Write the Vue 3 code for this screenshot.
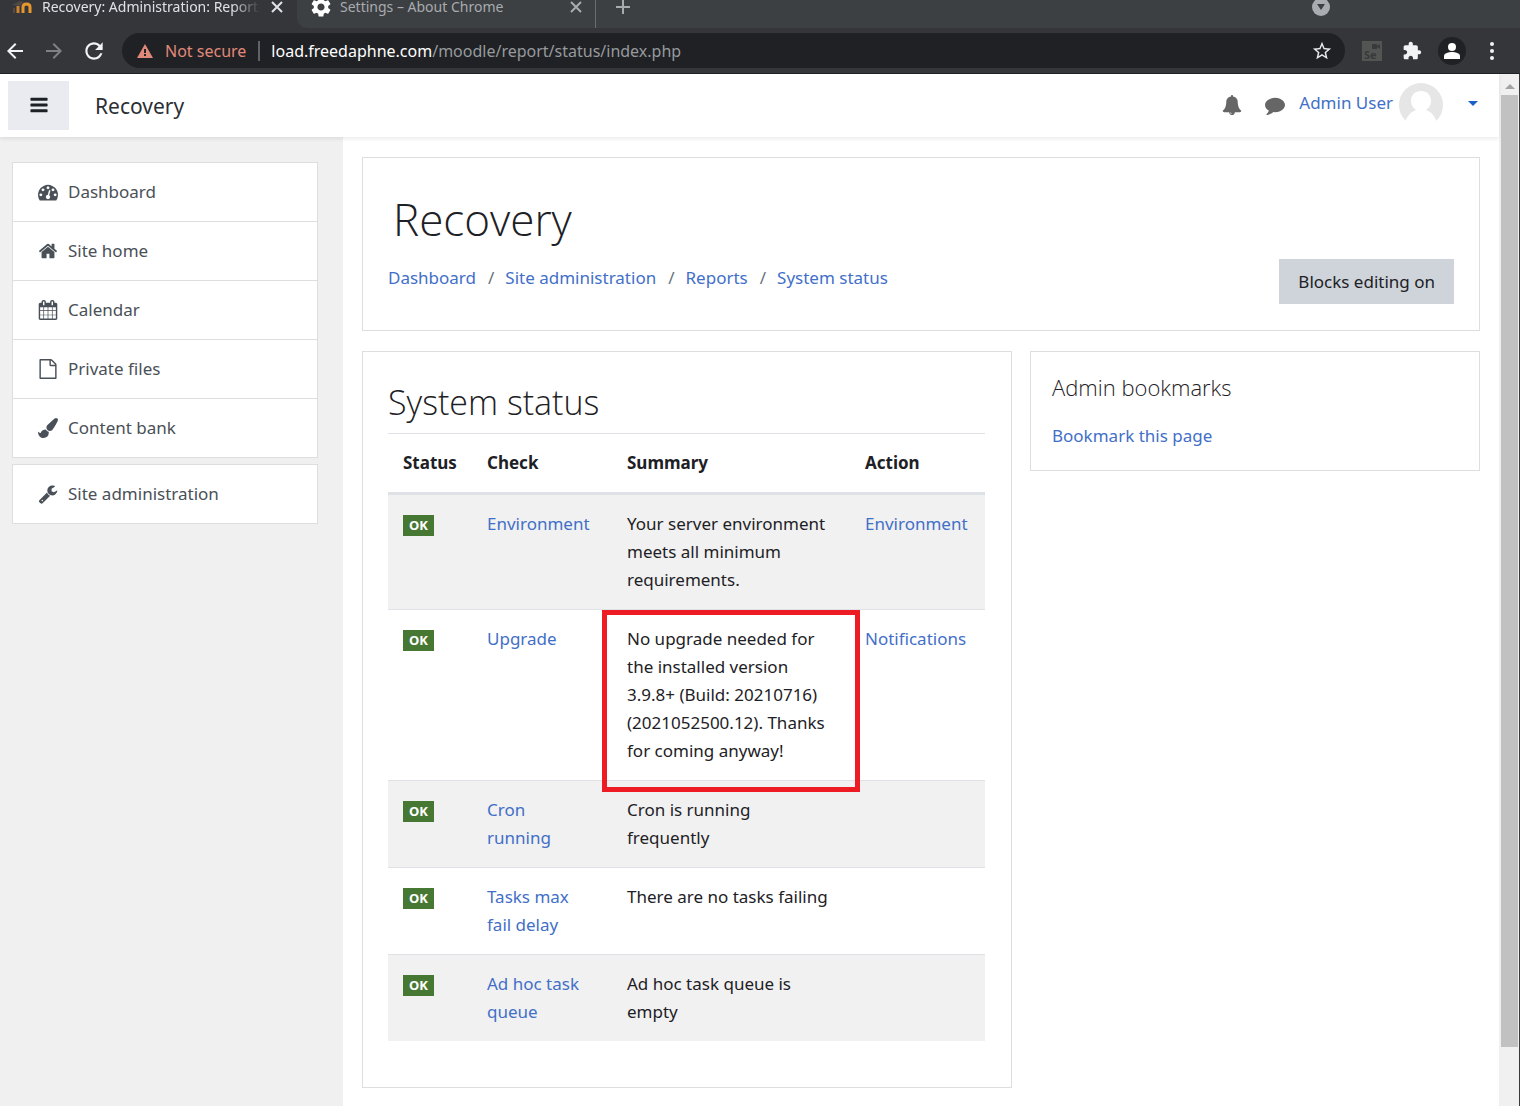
<script setup>
const drawer = [
  [
    { label: 'Dashboard', icon: 'tachometer' },
    { label: 'Site home', icon: 'home' },
    { label: 'Calendar', icon: 'calendar' },
    { label: 'Private files', icon: 'file' },
    { label: 'Content bank', icon: 'brush' },
  ],
  [{ label: 'Site administration', icon: 'wrench' }],
]

const crumbs = ['Dashboard', 'Site administration', 'Reports', 'System status']

const checks = [
  { name: 'Environment', summary: 'Your server environment meets all minimum requirements.', action: 'Environment' },
  {
    name: 'Upgrade',
    summary: 'No upgrade needed for the installed version 3.9.8+ (Build: 20210716) (2021052500.12). Thanks for coming anyway!',
    action: 'Notifications',
    marked: true,
  },
  { name: 'Cron running', summary: 'Cron is running frequently', action: '' },
  { name: 'Tasks max fail delay', summary: 'There are no tasks failing', action: '' },
  { name: 'Ad hoc task queue', summary: 'Ad hoc task queue is empty', action: '' },
]

const icons = {
  bars: 'M1664 1344v128q0 26-19 45t-45 19h-1408q-26 0-45-19t-19-45v-128q0-26 19-45t45-19h1408q26 0 45 19t19 45zm0-512v128q0 26-19 45t-45 19h-1408q-26 0-45-19t-19-45v-128q0-26 19-45t45-19h1408q26 0 45 19t19 45zm0-512v128q0 26-19 45t-45 19h-1408q-26 0-45-19t-19-45v-128q0-26 19-45t45-19h1408q26 0 45 19t19 45z',
  home: 'M1472 992v480q0 26-19 45t-45 19h-384v-384h-256v384h-384q-26 0-45-19t-19-45v-480q0-1 .5-3t.5-3l575-474 575 474q1 2 1 6zm223-69l-62 74q-8 9-21 11h-3q-13 0-21-7l-692-577-692 577q-12 8-24 7-13-2-21-11l-62-74q-8-10-7-23.5t11-21.5l719-599q32-26 76-26t76 26l244 204v-195q0-14 9-23t23-9h192q14 0 23 9t9 23v408l219 182q10 8 11 21.5t-7 23.5z',
  tachometer: 'M384 1152q0-53-37.5-90.5t-90.5-37.5-90.5 37.5-37.5 90.5 37.5 90.5 90.5 37.5 90.5-37.5 37.5-90.5zm192-448q0-53-37.5-90.5t-90.5-37.5-90.5 37.5-37.5 90.5 37.5 90.5 90.5 37.5 90.5-37.5 37.5-90.5zm428 481l101-382q6-26-7.5-48.5t-38.5-29.5-48 6.5-30 39.5l-101 382q-60 5-107 43.5t-63 98.5q-20 77 20 146t117 89 146-20 89-117q16-60-6-117t-72-91zm660-33q0-53-37.5-90.5t-90.5-37.5-90.5 37.5-37.5 90.5 37.5 90.5 90.5 37.5 90.5-37.5 37.5-90.5zm-640-640q0-53-37.5-90.5t-90.5-37.5-90.5 37.5-37.5 90.5 37.5 90.5 90.5 37.5 90.5-37.5 37.5-90.5zm448 192q0-53-37.5-90.5t-90.5-37.5-90.5 37.5-37.5 90.5 37.5 90.5 90.5 37.5 90.5-37.5 37.5-90.5zm320 448q0 261-141 483-19 29-54 29h-1402q-35 0-54-29-141-221-141-483 0-182 71-348t191-286 286-191 348-71 348 71 286 191 191 286 71 348z',
  calendar: 'M192 1664h288v-288h-288v288zm352 0h320v-288h-320v288zm-352-352h288v-320h-288v320zm352 0h320v-320h-320v320zm-352-384h288v-288h-288v288zm736 736h320v-288h-320v288zm-384-736h320v-288h-320v288zm768 736h288v-288h-288v288zm-384-352h320v-320h-320v320zm-352-864v-288q0-13-9.500-22.500t-22.500-9.500h-64q-13 0-22.500 9.500t-9.500 22.500v288q0 13 9.500 22.500t22.500 9.500h64q13 0 22.500-9.500t9.500-22.500zm736 864h288v-320h-288v320zm-384-384h320v-288h-320v288zm384 0h288v-288h-288v288zm32-480v-288q0-13-9.500-22.500t-22.500-9.500h-64q-13 0-22.500 9.500t-9.500 22.500v288q0 13 9.500 22.500t22.500 9.500h64q13 0 22.500-9.500t9.500-22.500zm384-64v1280q0 52-38 90t-90 38h-1408q-52 0-90-38t-38-90v-1280q0-52 38-90t90-38h128v-96q0-66 47-113t113-47h64q66 0 113 47t47 113v96h384v-96q0-66 47-113t113-47h64q66 0 113 47t47 113v96h128q52 0 90 38t38 90z',
  file: 'M1596 380q28 28 48 76t20 88v1152q0 40-28 68t-68 28h-1344q-40 0-68-28t-28-68v-1600q0-40 28-68t68-28h896q40 0 88 20t76 48zm-444-244v376h376q-10-29-22-41l-313-313q-12-12-41-22zm384 1528v-1024h-416q-40 0-68-28t-28-68v-416h-768v1536h1280z',
  brush: 'M1615 0q70 0 122.5 46.5t52.5 116.5q0 63-45 151-332 629-465 752-97 91-218 91-126 0-216.5-92.5t-90.5-219.5q0-128 92-212l638-579q59-54 130-54zm-909 1034q39 76 106.5 130t150.5 76l1 71q4 213-129.5 347t-348.5 134q-123 0-218-46.5t-152.5-127.500-86.5-183-29-220q7 5 41 30t62 44.5 59 36.5 46 17q41 0 55-37 25-66 57.5-112.5t69.5-76 88-47.5 103-25.5 125-10.5z',
  wrench: 'M448 1472q0-26-19-45t-45-19-45 19-19 45 19 45 45 19 45-19 19-45zm644-420l-682 682q-37 37-90 37-52 0-91-37l-106-108q-38-36-38-90 0-53 38-91l681-681q39 98 114.5 173.5t173.5 114.5zm634-435q0 39-23 106-47 134-164.5 217.5t-258.5 83.5q-185 0-316.5-131.5t-131.5-316.5 131.5-316.5 316.5-131.5q58 0 121.5 16.5t107.5 46.5q16 11 16 28t-16 28l-293 169v224l193 107q5-3 79-48.5t135.5-81 70.5-35.5q15 0 23.5 10t8.5 25z',
  bell: 'M912 1696q0-16-16-16-59 0-101.5-42.5t-42.5-101.5q0-16-16-16t-16 16q0 73 51.5 124.5t124.5 51.5q16 0 16-16zm816-288q0 52-38 90t-90 38h-448q0 106-75 181t-181 75-181-75-75-181h-448q-52 0-90-38t-38-90q50-42 91-88t85-119.5 74.5-158.5 50-206 19.5-260q0-152 117-282.5t307-158.5q-8-19-8-39 0-40 28-68t68-28 68 28 28 68q0 20-8 39 190 28 307 158.5t117 282.5q0 139 19.5 260t50 206 74.5 158.5 85 119.5 91 88z',
  comment: 'M1792 896q0 174-120 321.5t-326 233-450 85.5q-70 0-145-8-198 175-460 242-49 14-114 22-17 2-30.5-9t-17.5-29v-1q-3-4-.5-12t2-10 4.5-9.5l6-9 7-8.5 8-9q7-8 31-34.5t34.5-38 31-39.5 32.5-51 27-59 26-76q-157-89-247.5-220t-90.5-281q0-130 71-248.5t191-204.5 286-136.5 348-50.5q244 0 450 85.5t326 233 120 321.5z',
}
</script>

<template>
  <div class="window">
    <header class="chrome">
      <div class="tabs">
        <div class="tab active">
          <svg class="favicon" width="24" height="18" viewBox="0 0 24 18" fill="none">
            <path d="M3 15V10" stroke="#5a4a3b" stroke-width="2" />
            <path d="M7 15V8" stroke="#c98432" stroke-width="3" />
            <path d="M12 15V9c0-4 7-4 7 0v6" stroke="#e8972f" stroke-width="3" />
            <path d="M1 7l8-4 4 1-4 4z" fill="#4f4844" />
          </svg>
          <span class="tab-title">Recovery: Administration: Reports</span>
          <button class="close" aria-label="Close tab">
            <svg width="12" height="12" viewBox="0 0 12 12"><path d="M1 1l10 10M11 1L1 11" stroke="#dee1e6" stroke-width="2" /></svg>
          </button>
        </div>
        <div class="tab-rest">
          <div class="tab">
            <svg width="24" height="24" viewBox="0 0 24 24" fill="#fff"><path d="M19.140 12.940c.04-.3.06-.61.06-.94 0-.32-.02-.64-.07-.94l2.030-1.580c.18-.14.23-.41.12-.61l-1.920-3.320c-.12-.22-.37-.29-.59-.22l-2.390.96c-.5-.38-1.030-.7-1.620-.94l-.36-2.540c-.04-.24-.24-.41-.48-.41h-3.840c-.24 0-.43.17-.47.41l-.36 2.540c-.59.24-1.130.57-1.620.94l-2.390-.96c-.22-.08-.47 0-.59.22L2.740 8.870c-.12.21-.08.47.12.61l2.030 1.580c-.05.3-.09.63-.09.94s.02.64.07.94l-2.030 1.580c-.18.14-.23.41-.12.61l1.920 3.320c.12.22.37.29.59.22l2.390-.96c.5.38 1.030.7 1.620.94l.36 2.540c.05.24.24.41.48.41h3.840c.24 0 .44-.17.47-.41l.36-2.540c.59-.24 1.130-.56 1.620-.94l2.390.96c.22.08.47 0 .59-.22l1.920-3.320c.12-.22.07-.47-.12-.61l-2.010-1.580zM12 15.600c-1.980 0-3.600-1.620-3.600-3.600s1.620-3.600 3.600-3.600 3.600 1.620 3.600 3.600-1.620 3.600-3.600 3.600z" /></svg>
            <span class="tab-title">Settings – About Chrome</span>
            <button class="close" aria-label="Close tab">
              <svg width="12" height="12" viewBox="0 0 12 12"><path d="M1 1l10 10M11 1L1 11" stroke="#a9abae" stroke-width="2" /></svg>
            </button>
          </div>
          <button class="new-tab" aria-label="New tab">
            <svg width="16" height="16" viewBox="0 0 16 16"><path d="M8 1v14M1 8h14" stroke="#a9abae" stroke-width="2" /></svg>
          </button>
          <button class="tab-search" aria-label="Search tabs">
            <svg width="18" height="18" viewBox="0 0 18 18"><circle cx="9" cy="9" r="9" fill="#a9adb1" /><path d="M5 6h8l-4 6z" fill="#3c4043" /></svg>
          </button>
        </div>
      </div>

      <div class="toolbar">
        <button aria-label="Back"><svg width="24" height="24" viewBox="0 0 24 24" fill="#f1f3f4"><path d="M20 11H7.830l5.590-5.590L12 4l-8 8 8 8 1.410-1.410L7.830 13H20v-2z" /></svg></button>
        <button aria-label="Forward"><svg width="24" height="24" viewBox="0 0 24 24" fill="#7f8184"><path d="M12 4l-1.410 1.410L16.170 11H4v2h12.170l-5.580 5.590L12 20l8-8z" /></svg></button>
        <button aria-label="Reload"><svg width="26" height="26" viewBox="0 0 24 24" fill="#f1f3f4"><path d="M17.650 6.350C16.200 4.900 14.210 4 12 4c-4.420 0-7.990 3.580-7.990 8s3.570 8 7.990 8c3.730 0 6.840-2.550 7.730-6h-2.080c-.82 2.330-3.040 4-5.650 4-3.310 0-6-2.690-6-6s2.690-6 6-6c1.660 0 3.140.69 4.220 1.780L13 11h7V4l-2.350 2.350z" /></svg></button>
        <div class="address">
          <svg width="16" height="14" viewBox="0 0 16 14"><path d="M8 0l8 14H0z" fill="#e0897b" /><path d="M7 5h2v4H7zM7 10h2v2H7z" fill="#202124" /></svg>
          <span class="insecure">Not secure</span>
          <span class="url"><b>load.freedaphne.com</b>/moodle/report/status/index.php</span>
          <button aria-label="Bookmark this tab"><svg width="22" height="22" viewBox="0 0 24 24" fill="#e8eaed"><path d="M22 9.240l-7.190-.62L12 2 9.190 8.630 2 9.240l5.460 4.730L5.820 21 12 17.270 18.180 21l-1.630-7.030L22 9.240zM12 15.400l-3.760 2.270 1-4.280-3.320-2.880 4.380-.38L12 6.100l1.710 4.040 4.380.38-3.320 2.880 1 4.280L12 15.400z" /></svg></button>
        </div>
        <div class="actions">
          <button class="selenium" aria-label="Selenium IDE">
            <span>Se</span>
            <svg width="8" height="5" viewBox="0 0 8 5" fill="#38393b"><path d="M0 0h5v5H0zM5 2l3-2v5l-3-2z" /></svg>
          </button>
          <button aria-label="Extensions"><svg width="20" height="20" viewBox="0 0 24 24" fill="#f1f3f4"><path d="M20.500 11H19V7c0-1.100-.9-2-2-2h-4V3.500C13 2.120 11.880 1 10.500 1S8 2.120 8 3.500V5H4c-1.100 0-1.990.9-1.990 2v3.800H3.500c1.490 0 2.700 1.210 2.700 2.700s-1.210 2.700-2.700 2.700H2V20c0 1.100.9 2 2 2h3.800v-1.500c0-1.490 1.210-2.700 2.700-2.700 1.490 0 2.700 1.210 2.700 2.700V22H17c1.100 0 2-.9 2-2v-4h1.500c1.380 0 2.500-1.120 2.500-2.500S21.880 11 20.500 11z" /></svg></button>
          <button class="profile" aria-label="Profile"><svg width="28" height="28" viewBox="0 0 28 28"><circle cx="14" cy="14" r="14" fill="#202124" /><circle cx="14" cy="10" r="4" fill="#fff" /><path d="M6 22v-3c0-3 5-4 8-4s8 1 8 4v3z" fill="#fff" /></svg></button>
          <button aria-label="Menu"><svg width="6" height="18" viewBox="0 0 6 18" fill="#f1f3f4"><circle cx="3" cy="2" r="2" /><circle cx="3" cy="9" r="2" /><circle cx="3" cy="16" r="2" /></svg></button>
        </div>
      </div>
    </header>

    <div class="viewport">
      <div class="page">
        <nav class="navbar">
          <button class="hamburger" aria-label="Side panel">
            <svg width="20" height="20" viewBox="0 0 1792 1792" fill="#1d2125"><path :d="icons.bars" /></svg>
          </button>
          <a class="brand" href="#">Recovery</a>
          <button class="bell" aria-label="Notifications"><svg width="20" height="20" viewBox="0 0 1792 1792" fill="#666"><path :d="icons.bell" /></svg></button>
          <button class="chat" aria-label="Messages"><svg width="20" height="20" viewBox="0 0 1792 1792" fill="#666"><path :d="icons.comment" /></svg></button>
          <a class="user" href="#">
            <span>Admin User</span>
            <svg width="44" height="44" viewBox="0 0 44 44">
              <circle cx="22" cy="22" r="22" fill="#e6e6e6" />
              <path d="M22 8c6 0 10 4 10 10 0 4-2 7-5 9 6 2 9 7 11 12v5H6v-5c2-5 5-10 11-12-3-2-5-5-5-9 0-6 4-10 10-10z" fill="#fff" />
            </svg>
          </a>
          <button class="caret" aria-label="User menu"><svg width="10" height="5" viewBox="0 0 10 5"><path d="M0 0h10L5 5z" fill="#1c5fc9" /></svg></button>
        </nav>

        <div class="body">
          <aside class="drawer">
            <ul v-for="(group, g) in drawer" :key="g">
              <li v-for="item in group" :key="item.label">
                <a href="#">
                  <svg width="20" height="20" viewBox="0 0 1792 1792"><path :d="icons[item.icon]" /></svg>
                  {{ item.label }}
                </a>
              </li>
            </ul>
          </aside>

          <main>
            <section class="card heading">
              <h1>Recovery</h1>
              <div class="heading-row">
                <ol class="crumbs">
                  <li v-for="c in crumbs" :key="c"><a href="#">{{ c }}</a></li>
                </ol>
                <button class="edit">Blocks editing on</button>
              </div>
            </section>

            <div class="columns">
              <section class="card report">
                <h2>System status</h2>
                <table>
                  <colgroup><col class="c-status" /><col class="c-check" /><col class="c-summary" /><col /></colgroup>
                  <thead>
                    <tr><th>Status</th><th>Check</th><th>Summary</th><th>Action</th></tr>
                  </thead>
                  <tbody>
                    <tr v-for="c in checks" :key="c.name">
                      <td><span class="badge">OK</span></td>
                      <td class="name"><a href="#">{{ c.name }}</a></td>
                      <td :class="{ marked: c.marked }">{{ c.summary }}</td>
                      <td><a v-if="c.action" href="#">{{ c.action }}</a></td>
                    </tr>
                  </tbody>
                </table>
              </section>

              <section class="card bookmarks">
                <h5>Admin bookmarks</h5>
                <a href="#">Bookmark this page</a>
              </section>
            </div>
          </main>
        </div>
      </div>

      <div class="scrollbar">
        <svg width="10" height="5" viewBox="0 0 10 5"><path d="M5 0l5 5H0z" fill="#a3a3a3" /></svg>
        <div class="thumb"></div>
      </div>
    </div>
  </div>
</template>

<style>
body {
  background: #fff;
}
</style>

<style scoped>
* {
  box-sizing: border-box;
}
.window {
  display: flex;
  flex-direction: column;
  min-height: 100vh;
  font: 400 17px/28px "Noto Sans", "Open Sans", sans-serif;
  color: #1d2125;
}
button {
  display: flex;
  align-items: center;
  justify-content: center;
  padding: 0;
  border: 0;
  background: none;
  font: inherit;
  color: inherit;
}
svg {
  display: block;
  flex: none;
}
a {
  color: #426fc8;
  text-decoration: none;
}
h1, h2, h5, ul, ol {
  margin: 0;
  padding: 0;
  list-style: none;
}
h1, h2, h5 {
  font-family: "Open Sans", "Noto Sans", sans-serif;
  font-weight: 300;
}

/* Browser frame */
.chrome {
  background: #35363a;
  border-bottom: 1px solid #202124;
  font-size: 16px;
}
.tabs {
  display: flex;
  height: 28px;
  overflow: hidden;
  font-size: 14px;
  line-height: 14px;
  color: #dee1e6;
}
.tab {
  display: flex;
  align-items: center;
  align-self: flex-end;
  gap: 7px;
  height: 42px;
  width: 297px;
  flex: none;
  padding: 0 10px 0 11px;
}
.tab-title {
  flex: 1;
  padding: 4px 0;
  overflow: hidden;
  white-space: nowrap;
}
.active .tab-title {
  -webkit-mask-image: linear-gradient(to left, transparent, #000 28px);
  mask-image: linear-gradient(to left, transparent, #000 28px);
}
.close {
  width: 20px;
  height: 20px;
}
.tab-rest {
  display: flex;
  align-items: flex-end;
  flex: 1;
  background: #3c4043;
  border-bottom-left-radius: 10px;
  color: #a9abae;
}
.tab-rest .tab {
  border-right: 1px solid #6a6d70;
  width: 299px;
  padding: 0 9px 0 12px;
}
.new-tab {
  width: 54px;
  height: 42px;
}
.tab-search {
  height: 42px;
  margin-left: auto;
  margin-right: 190px;
}
.toolbar {
  display: flex;
  align-items: center;
  gap: 15px;
  height: 45px;
  padding: 0 25px 0 3px;
}
.address {
  display: flex;
  align-items: center;
  flex: 1;
  height: 35px;
  padding: 0 12px 0 15px;
  border-radius: 18px;
  background: #202124;
}
.actions {
  display: flex;
  align-items: center;
  gap: 20px;
  padding-left: 2px;
}
.profile {
  margin: 0 3px 0 -4px;
}
.insecure {
  margin: 0 12px;
  color: #e0897b;
}
.url {
  flex: 1;
  padding-left: 11px;
  line-height: 20px;
  border-left: 2px solid #5f6368;
  color: #969a9e;
}
.url b {
  font-weight: 400;
  color: #fff;
}
.selenium {
  position: relative;
  width: 20px;
  height: 20px;
  background: #545552;
  align-items: flex-end;
  justify-content: flex-start;
  padding-left: 2px;
  font-size: 11px;
  line-height: 12px;
  font-weight: 700;
  color: #38393b;
}
.selenium svg {
  position: absolute;
  top: 3px;
  right: 2px;
}

/* Page frame */
.viewport {
  display: flex;
  flex: 1;
  border-right: 1px solid #3a3a3a;
}
.page {
  display: flex;
  flex-direction: column;
  flex: 1;
}
.scrollbar {
  display: flex;
  flex-direction: column;
  align-items: center;
  width: 20px;
  padding: 10px 1px 59px 2px;
  background: #f0f0f0;
}
.thumb {
  flex: 1;
  width: 100%;
  margin-top: 6px;
  background: #c1c1c1;
}
.navbar {
  position: relative;
  display: flex;
  align-items: center;
  height: 63px;
  padding: 0 21px 1px 8px;
  background: #fff;
  box-shadow: 0 2px 4px rgba(0, 0, 0, 0.08);
}
.hamburger {
  width: 61px;
  height: 49px;
  background: #e9ebf0;
}
.brand {
  margin-left: 26px;
  padding-top: 2px;
  font-size: 21px;
  color: #2b3035;
}
.bell {
  margin-left: auto;
}
.chat {
  margin: 0 14px 0 23px;
}
.user {
  display: flex;
  align-items: center;
  gap: 6px;
  height: 44px;
}
.user span {
  padding-bottom: 4px;
}
.caret {
  margin-left: 25px;
  padding-bottom: 4px;
}
.body {
  display: flex;
  flex: 1;
}
.drawer {
  display: flex;
  flex-direction: column;
  gap: 6px;
  width: 343px;
  flex: none;
  padding: 25px 25px 0 12px;
  background: #f0f0f0;
}
.drawer ul {
  border: 1px solid #dedede;
  background: #fff;
}
.drawer li + li {
  border-top: 1px solid #dedede;
}
.drawer a {
  display: flex;
  align-items: center;
  gap: 10px;
  height: 58px;
  padding-left: 25px;
  color: #495057;
}
.drawer svg {
  fill: #495057;
}
main {
  flex: 1;
  padding: 20px 19px 18px;
}
.card {
  border: 1px solid #dedede;
  background: #fff;
}
.heading {
  padding: 26px 25px;
}
h1 {
  margin: 0 5px 5px;
  font-size: 44px;
  line-height: 70px;
}
.heading-row {
  display: flex;
  justify-content: space-between;
  align-items: flex-start;
}
.crumbs {
  display: flex;
  padding: 5px 0;
}
.crumbs li + li::before {
  content: "/";
  padding: 0 11px 0 12px;
  color: #6a737b;
}
.edit {
  height: 45px;
  padding: 0 19px;
  background: #ced4da;
}
.columns {
  display: flex;
  align-items: flex-start;
  gap: 18px;
  margin-top: 20px;
}
.report {
  flex: 1;
  padding: 26px 26px 46px 25px;
}
h2 {
  margin-bottom: 7px;
  font-size: 34px;
  line-height: 48px;
}
table {
  width: 100%;
  table-layout: fixed;
  border-collapse: separate;
  border-spacing: 0;
}
.c-status {
  width: 84px;
}
.c-check {
  width: 140px;
}
.c-summary {
  width: 238px;
}
th, td {
  padding: 15px;
  text-align: left;
  vertical-align: top;
  border-top: 1px solid #dee2e6;
}
.name {
  padding-right: 30px;
}
th {
  font-weight: 700;
  border-bottom: 3px solid #dee2e6;
}
tbody tr:first-child td {
  border-top: 0;
}
tbody tr:nth-child(odd) {
  background: #f1f1f1;
}
.badge {
  display: inline-block;
  padding: 0 6px;
  background: #477833;
  color: #fff;
  font-size: 13px;
  font-weight: 700;
  line-height: 21px;
}
.marked {
  position: relative;
}
/* Red frame drawn around the highlighted cell */
.marked::after {
  content: "";
  position: absolute;
  inset: 0 -10px -12px;
  border: 5px solid #ed1c24;
}
.bookmarks {
  width: 450px;
  padding: 21px 21px 20px;
}
h5 {
  margin-bottom: 21px;
  font-size: 22px;
  line-height: 28px;
}
</style>
